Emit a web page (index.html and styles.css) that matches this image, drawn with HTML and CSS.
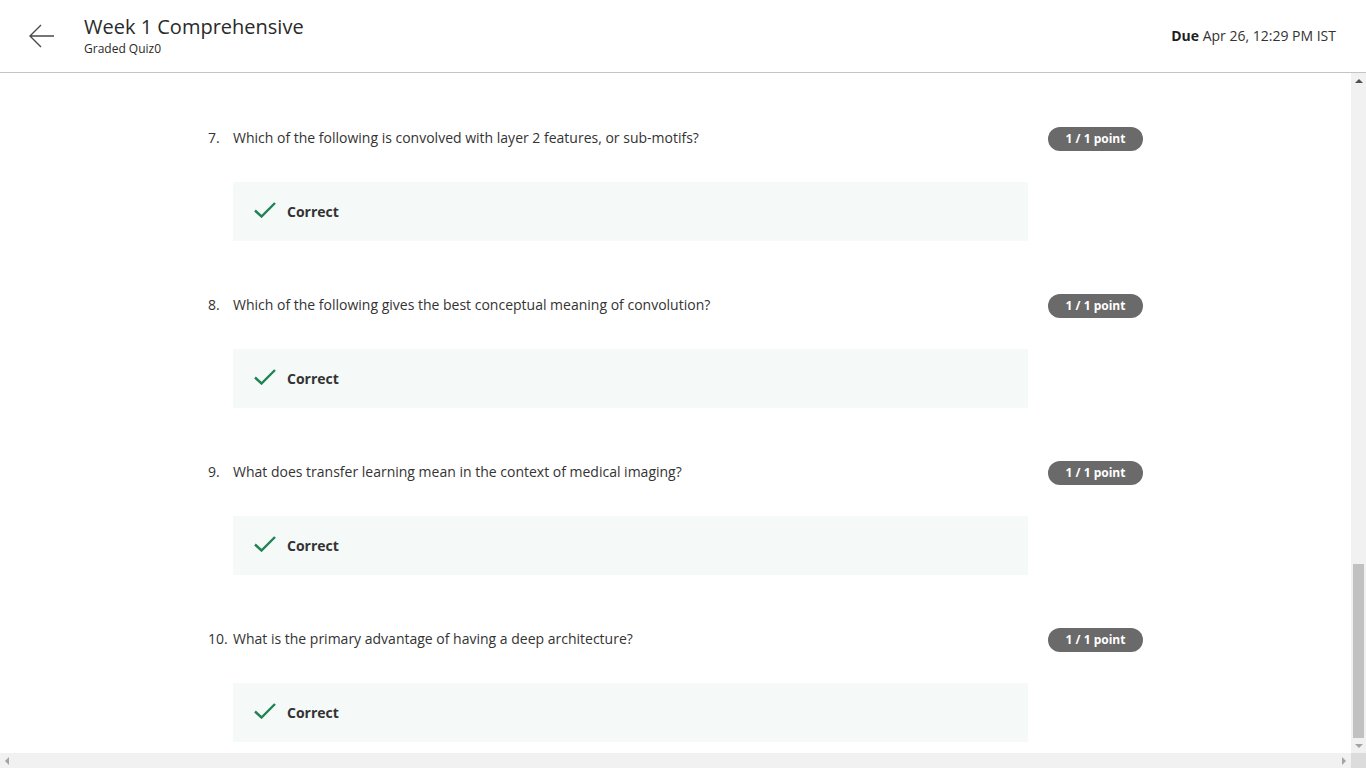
FILE: index.html
```html
<!DOCTYPE html>
<html lang="en">
<head>
<meta charset="utf-8">
<title>Week 1 Comprehensive</title>
<link rel="stylesheet" href="styles.css">
</head>
<body>
<div class="app">
  <header class="topbar">
    <div class="back">
      <svg width="26" height="24" viewBox="0 0 26 24"><path d="M25 12H2M12 1L1 12l11 11" fill="none" stroke="#4a4a4a" stroke-width="1.4"/></svg>
    </div>
    <div class="titles">
      <div class="title">Week 1 Comprehensive</div>
      <div class="subtitle">Graded Quiz0</div>
    </div>
    <div class="due"><b>Due</b> Apr 26, 12:29 PM IST</div>
  </header>
  <div class="body-row">
    <main class="content">
      <div class="quiz">
        <section class="q">
          <div class="q-row">
            <span class="num">7.</span>
            <span class="text">Which of the following is convolved with layer 2 features, or sub-motifs?</span>
            <span class="pill">1 / 1 point</span>
          </div>
          <div class="feedback">
            <svg class="check" width="22" height="16" viewBox="0 0 22 16"><path d="M1 8.5l6.5 6L21 1" fill="none" stroke="#1f8354" stroke-width="2.4"/></svg>
            <span>Correct</span>
          </div>
        </section>
        <section class="q">
          <div class="q-row">
            <span class="num">8.</span>
            <span class="text">Which of the following gives the best conceptual meaning of convolution?</span>
            <span class="pill">1 / 1 point</span>
          </div>
          <div class="feedback">
            <svg class="check" width="22" height="16" viewBox="0 0 22 16"><path d="M1 8.5l6.5 6L21 1" fill="none" stroke="#1f8354" stroke-width="2.4"/></svg>
            <span>Correct</span>
          </div>
        </section>
        <section class="q">
          <div class="q-row">
            <span class="num">9.</span>
            <span class="text">What does transfer learning mean in the context of medical imaging?</span>
            <span class="pill">1 / 1 point</span>
          </div>
          <div class="feedback">
            <svg class="check" width="22" height="16" viewBox="0 0 22 16"><path d="M1 8.5l6.5 6L21 1" fill="none" stroke="#1f8354" stroke-width="2.4"/></svg>
            <span>Correct</span>
          </div>
        </section>
        <section class="q">
          <div class="q-row">
            <span class="num">10.</span>
            <span class="text">What is the primary advantage of having a deep architecture?</span>
            <span class="pill">1 / 1 point</span>
          </div>
          <div class="feedback">
            <svg class="check" width="22" height="16" viewBox="0 0 22 16"><path d="M1 8.5l6.5 6L21 1" fill="none" stroke="#1f8354" stroke-width="2.4"/></svg>
            <span>Correct</span>
          </div>
        </section>
      </div>
    </main>
    <div class="vscroll">
      <div class="arrow-up"></div>
      <div class="track"><div class="thumb"></div></div>
      <div class="arrow-down"></div>
    </div>
  </div>
  <div class="hscroll">
    <div class="hbar">
      <div class="arrow-left"></div>
      <div class="arrow-right"></div>
    </div>
    <div class="corner"></div>
  </div>
</div>
</body>
</html>
```
FILE: styles.css
```css
* { box-sizing: border-box; }
html, body { margin: 0; padding: 0; height: 100%; overflow: hidden; }
body {
  font-family: "Open Sans", "Liberation Sans", sans-serif;
  color: #1f1f1f;
  background: #fff;
}
.app { display: flex; flex-direction: column; height: 768px; width: 1366px; }

.topbar {
  height: 73px;
  flex: none;
  display: flex;
  align-items: flex-start;
  border-bottom: 1px solid #c4c4c4;
  padding: 0 30px 0 29px;
}
.back { width: 26px; margin-top: 24px; margin-right: 29px; }
.titles { flex: 1; padding-top: 13px; }
.title { font-size: 20px; line-height: 28px; color: #2a2a2a; }
.subtitle { font-size: 12px; line-height: 16px; color: #2a2a2a; margin-top: 0; }
.due { font-size: 14px; line-height: 20px; margin-top: 26px; color: #333; }
.due b { font-weight: 700; color: #1f1f1f; }

.body-row { flex: 1; display: flex; min-height: 0; }
.content { flex: 1; overflow: hidden; }
.quiz { width: 935px; margin: 0 auto; padding-top: 54px; }
.q { margin-bottom: 53px; }
.q-row { display: flex; align-items: center; height: 24px; font-size: 14px; line-height: 20px; color: #333; }
.num { width: 25px; flex: none; margin-top: -2px; }
.text { flex: 1; margin-top: -2px; }
.pill {
  flex: none;
  width: 95px;
  height: 24px;
  border-radius: 12px;
  background: #6a6a6a;
  color: #fff;
  font-size: 12px;
  font-weight: 700;
  line-height: 24px;
  text-align: center;
}
.feedback {
  margin: 31px 0 0 25px;
  width: 795px;
  height: 59px;
  background: #f5faf8;
  display: flex;
  align-items: center;
  padding-left: 21px;
  font-size: 14px;
  font-weight: 700;
  color: #333;
}
.check { margin-right: 11px; margin-top: -4px; }

.vscroll { width: 15px; flex: none; background: #f1f1f1; display: flex; flex-direction: column; align-items: center; }
.arrow-up { width: 0; height: 0; margin-top: 6px; border-left: 4px solid transparent; border-right: 4px solid transparent; border-bottom: 4px solid #505050; }
.track { flex: 1; width: 100%; position: relative; margin-top: 5px; }
.thumb { position: absolute; left: 2px; right: 2px; bottom: 6px; height: 174px; background: #c1c1c1; }
.arrow-down { width: 0; height: 0; margin-bottom: 5px; border-left: 4px solid transparent; border-right: 4px solid transparent; border-top: 4px solid #a3a3a3; }

.hscroll { height: 15px; flex: none; display: flex; }
.hbar { flex: 1; background: #f1f1f1; display: flex; align-items: center; justify-content: space-between; padding: 0 5px; }
.arrow-left { width: 0; height: 0; border-top: 4px solid transparent; border-bottom: 4px solid transparent; border-right: 4px solid #a3a3a3; }
.arrow-right { width: 0; height: 0; border-top: 4px solid transparent; border-bottom: 4px solid transparent; border-left: 4px solid #a3a3a3; }
.corner { width: 15px; background: #dcdcdc; }
```
